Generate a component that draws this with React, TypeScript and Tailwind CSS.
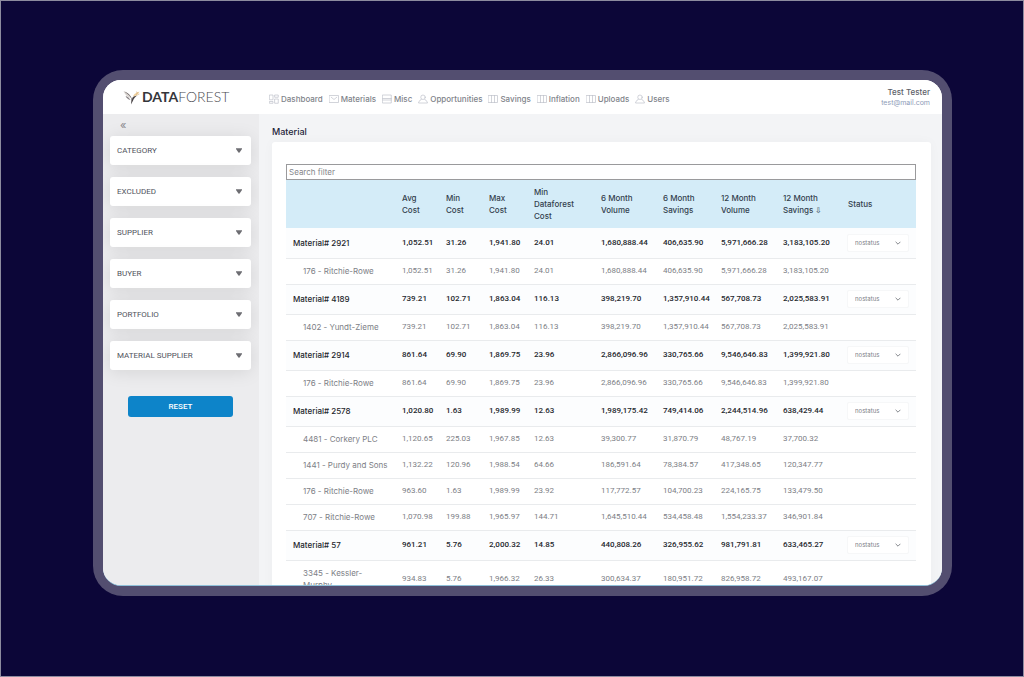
// Material overview: top bar, filter sidebar and the grouped cost table.
import type { ReactNode } from "react";

type Row = {
  name: string;
  values: string[];
  group?: boolean;
};

const FILTERS = [
  "CATEGORY",
  "EXCLUDED",
  "SUPPLIER",
  "BUYER",
  "PORTFOLIO",
  "MATERIAL SUPPLIER",
];

const COLUMNS = [
  { label: "", width: "w-[109px]" },
  { label: "Avg Cost", width: "w-[44px]" },
  { label: "Min Cost", width: "w-[43px]" },
  { label: "Max Cost", width: "w-[45px]" },
  { label: "Min Dataforest Cost", width: "w-[67px]" },
  { label: "6 Month Volume", width: "w-[62px]" },
  { label: "6 Month Savings", width: "w-[58px]" },
  { label: "12 Month Volume", width: "w-[62px]" },
  { label: "12 Month Savings ⇩", width: "w-[65px]" },
  { label: "Status", width: "w-[75px]" },
];

const ROWS: Row[] = [
  { group: true, name: "Material# 2921", values: ["1,052.51", "31.26", "1,941.80", "24.01", "1,680,888.44", "406,635.90", "5,971,666.28", "3,183,105.20"] },
  { name: "176 - Ritchie-Rowe", values: ["1,052.51", "31.26", "1,941.80", "24.01", "1,680,888.44", "406,635.90", "5,971,666.28", "3,183,105.20"] },
  { group: true, name: "Material# 4189", values: ["739.21", "102.71", "1,863.04", "116.13", "398,219.70", "1,357,910.44", "567,708.73", "2,025,583.91"] },
  { name: "1402 - Yundt-Zieme", values: ["739.21", "102.71", "1,863.04", "116.13", "398,219.70", "1,357,910.44", "567,708.73", "2,025,583.91"] },
  { group: true, name: "Material# 2914", values: ["861.64", "69.90", "1,869.75", "23.96", "2,866,096.96", "330,765.66", "9,546,646.83", "1,399,921.80"] },
  { name: "176 - Ritchie-Rowe", values: ["861.64", "69.90", "1,869.75", "23.96", "2,866,096.96", "330,765.66", "9,546,646.83", "1,399,921.80"] },
  { group: true, name: "Material# 2578", values: ["1,020.80", "1.63", "1,989.99", "12.63", "1,989,175.42", "749,414.06", "2,244,514.96", "638,429.44"] },
  { name: "4481 - Corkery PLC", values: ["1,120.65", "225.03", "1,967.85", "12.63", "39,300.77", "31,870.79", "48,767.19", "37,700.32"] },
  { name: "1441 - Purdy and Sons", values: ["1,132.22", "120.96", "1,988.54", "64.66", "186,591.64", "78,384.57", "417,348.65", "120,347.77"] },
  { name: "176 - Ritchie-Rowe", values: ["963.60", "1.63", "1,989.99", "23.92", "117,772.57", "104,700.23", "224,165.75", "133,479.50"] },
  { name: "707 - Ritchie-Rowe", values: ["1,070.98", "199.88", "1,965.97", "144.71", "1,645,510.44", "534,458.48", "1,554,233.37", "346,901.84"] },
  { group: true, name: "Material# 57", values: ["961.21", "5.76", "2,000.32", "14.85", "440,808.26", "326,955.62", "981,791.81", "633,465.27"] },
  { name: "3345 - Kessler-\nMurphy", values: ["934.83", "5.76", "1,966.32", "26.33", "300,634.37", "180,951.72", "826,958.72", "493,167.07"] },
];

function Icon({ children }: { children: ReactNode }) {
  return (
    <svg
      viewBox="0 0 20 20"
      className="size-2.5 shrink-0 text-[#b9bdc6]"
      fill="none"
      stroke="currentColor"
      strokeWidth="1.3"
      strokeLinecap="round"
      strokeLinejoin="round"
      aria-hidden="true"
    >
      {children}
    </svg>
  );
}

const DashboardIcon = () => (
  <Icon>
    <path d="M1.5 2h6.5v9.5H1.5zM12 2h6.5v4.5H12zM1.5 15h6.5v3.5H1.5zM12 10h6.5v8.5H12z" />
  </Icon>
);

const MailIcon = () => (
  <Icon>
    <path d="M1 3h18v14H1zM4.5 6.5 10 11l5.5-4.5" />
  </Icon>
);

const DrawersIcon = () => (
  <Icon>
    <path d="M1.5 2h17v16h-17zM1.5 9h17M1.5 12h17" />
  </Icon>
);

const UserIcon = () => (
  <Icon>
    <circle cx="10" cy="6.5" r="4.5" />
    <path d="M7 10.8c-.5 2-5.5 1.2-6 7.200h18c-.5-6-5.500-5.200-6-7.200" />
  </Icon>
);

const BoardIcon = () => (
  <Icon>
    <path d="M1 3h18v14H1zM7 3v14M13 3v14" />
  </Icon>
);

const NAV = [
  { label: "Dashboard", icon: DashboardIcon },
  { label: "Materials", icon: MailIcon },
  { label: "Misc", icon: DrawersIcon },
  { label: "Opportunities", icon: UserIcon },
  { label: "Savings", icon: BoardIcon },
  { label: "Inflation", icon: BoardIcon },
  { label: "Uploads", icon: BoardIcon },
  { label: "Users", icon: UserIcon },
];

function Logo() {
  return (
    <a href="#" className="flex w-[146px] shrink-0 items-center" aria-label="Dataforest">
      <svg viewBox="0 0 36 30" className="h-[15px] w-[18px]" aria-hidden="true">
        <path d="M1 2c5 2 9 3 13 8l1 6C10 14 4 10 1 2z" fill="#d9d4d0" />
        <path d="M3 3c6 5 11 7 14 15l-1 11c5-8 5-14 13-18-7 0-10 3-11 7C15 10 9 6 3 3z" fill="#4a4548" />
        <path d="M5 12c4 1 7 3 10 8-5-1-8-4-10-8z" fill="#8a8486" />
        <path d="M20 13c2-6 6-7 13-10-2 6-6 9-13 10z" fill="#f0d3a2" />
        <path d="M27 3l1 4M33 8l-4 2M30 4l-4 6" stroke="#d3a871" strokeWidth="1" fill="none" />
      </svg>
      <span className="ml-px font-[Lato,sans-serif] text-sm leading-4 text-[#4a4b50]">
        <span className="font-bold text-[#35363b]">DATA</span>
        <span className="font-light">FOREST</span>
      </span>
    </a>
  );
}

function Header() {
  return (
    <header className="flex h-[34px] shrink-0 items-center bg-white pr-3 pl-5">
      <Logo />
      <nav className="flex items-center gap-1.5 pt-1">
        {NAV.map(({ label, icon: NavIcon }) => (
          <a
            key={label}
            href="#"
            className="flex items-center gap-0.5 text-[8px] leading-3 font-medium text-[#80838a]"
          >
            <NavIcon />
            {label}
          </a>
        ))}
      </nav>
      <div className="ml-auto text-right">
        <p className="text-[8px] leading-3 font-medium text-[#5c6068]">Test Tester</p>
        <p className="text-[7px] leading-[10px] text-[#8e9cb8]">test@mail.com</p>
      </div>
    </header>
  );
}

function Sidebar() {
  return (
    <aside className="w-[156px] shrink-0 bg-[#ececee] pr-2 pl-[7px]">
      <button
        type="button"
        aria-label="Collapse filters"
        className="block h-[22px] pl-2.5 text-[11px] leading-[22px] text-[#8b8b90]"
      >
        «
      </button>
      <div className="flex flex-col gap-3">
        {FILTERS.map((label) => (
          <button
            key={label}
            type="button"
            className="flex h-[29px] items-center justify-between rounded-[3px] bg-white pr-[9px] pl-[7px] font-[Roboto,sans-serif] text-[8px] text-[#50535c] shadow-[0_2px_18px_rgba(0,0,0,0.10)]"
          >
            {label}
            <svg viewBox="0 0 8 6" className="h-[5px] w-1.5" aria-hidden="true">
              <path d="M0 0h8v1L4.500 6h-1L0 1z" fill="#6d6d72" />
            </svg>
          </button>
        ))}
      </div>
      <button
        type="button"
        className="mx-auto mt-[26px] block h-[21px] w-[105px] rounded-[3px] bg-[#0d84c9] font-[Roboto,sans-serif] text-[8px] font-medium text-white"
      >
        RESET
      </button>
    </aside>
  );
}

function StatusSelect({ name }: { name: string }) {
  return (
    <div className="relative h-[18px] w-[62px]">
      <select
        aria-label={`Status of ${name}`}
        className="size-full appearance-none rounded-[2px] border border-[#f6f7f8] bg-white pl-[7px] text-[6px] font-normal text-[#7d8087]"
      >
        <option>nostatus</option>
      </select>
      <svg
        viewBox="0 0 10 6"
        className="pointer-events-none absolute top-[7px] right-2 h-1 w-1.5"
        aria-hidden="true"
      >
        <path d="M1 1l4 4 4-4" fill="none" stroke="#777a80" strokeWidth="1.5" />
      </svg>
    </div>
  );
}

function MaterialTable() {
  return (
    <table className="w-full table-fixed border-collapse text-left text-[8px] leading-3">
      <thead className="bg-[#d4ecf8] text-[#33404d]">
        <tr className="h-12">
          {COLUMNS.map(({ label, width }) => (
            <th key={label} scope="col" className={`${width} pr-3 pl-[7px] font-medium`}>
              {label}
            </th>
          ))}
        </tr>
      </thead>
      <tbody>
        {ROWS.map(({ name, values, group }, i) => (
          <tr
            key={i}
            className={
              group
                ? "h-[30px] border-b border-[#e9ebed] bg-[#fcfdfe] font-medium text-[#24272d]"
                : "h-[26px] border-b border-[#e9ebed] text-[#7d8086]"
            }
          >
            <td className={group ? "pl-[7px]" : "py-1.5 pl-[17px] whitespace-pre-line"}>
              {name}
            </td>
            {values.map((value, col) => (
              <td key={col} className="pl-[7px] font-[Roboto,sans-serif]">
                {value}
              </td>
            ))}
            <td className="pl-[6px]">{group && <StatusSelect name={name} />}</td>
          </tr>
        ))}
      </tbody>
    </table>
  );
}

export default function App() {
  return (
    <div className="flex h-screen border border-[#8d8b9f] bg-[#0c0638] pt-[69px] pr-[71px] pb-20 pl-[92px] font-[Inter,sans-serif]">
      <div className="flex flex-1 rounded-[30px] bg-[#534e70] p-2.5">
        <div className="flex min-w-0 flex-1 flex-col overflow-hidden rounded-[18px] border-b border-[#8fc0d8] bg-white">
          <Header />
          <div className="flex min-h-0 flex-1">
            <Sidebar />
            <main className="min-w-0 flex-1 bg-[#f3f4f6] pr-[11px] pl-[13px]">
              <h1 className="pt-3 pb-1 text-[9px] leading-3 font-medium text-[#23253a]">
                Material
              </h1>
              <section className="rounded-[3px] bg-white pt-[22px] pr-[15px] pl-3.5 shadow-[0_0_12px_rgba(0,0,0,0.03)]">
                <input
                  type="text"
                  aria-label="Search filter"
                  placeholder="Search filter"
                  className="block h-4 w-full border border-[#9a9a9c] bg-white px-0.5 text-[8px] text-[#555] placeholder:text-[#85868a]"
                />
                <MaterialTable />
              </section>
            </main>
          </div>
        </div>
      </div>
    </div>
  );
}
